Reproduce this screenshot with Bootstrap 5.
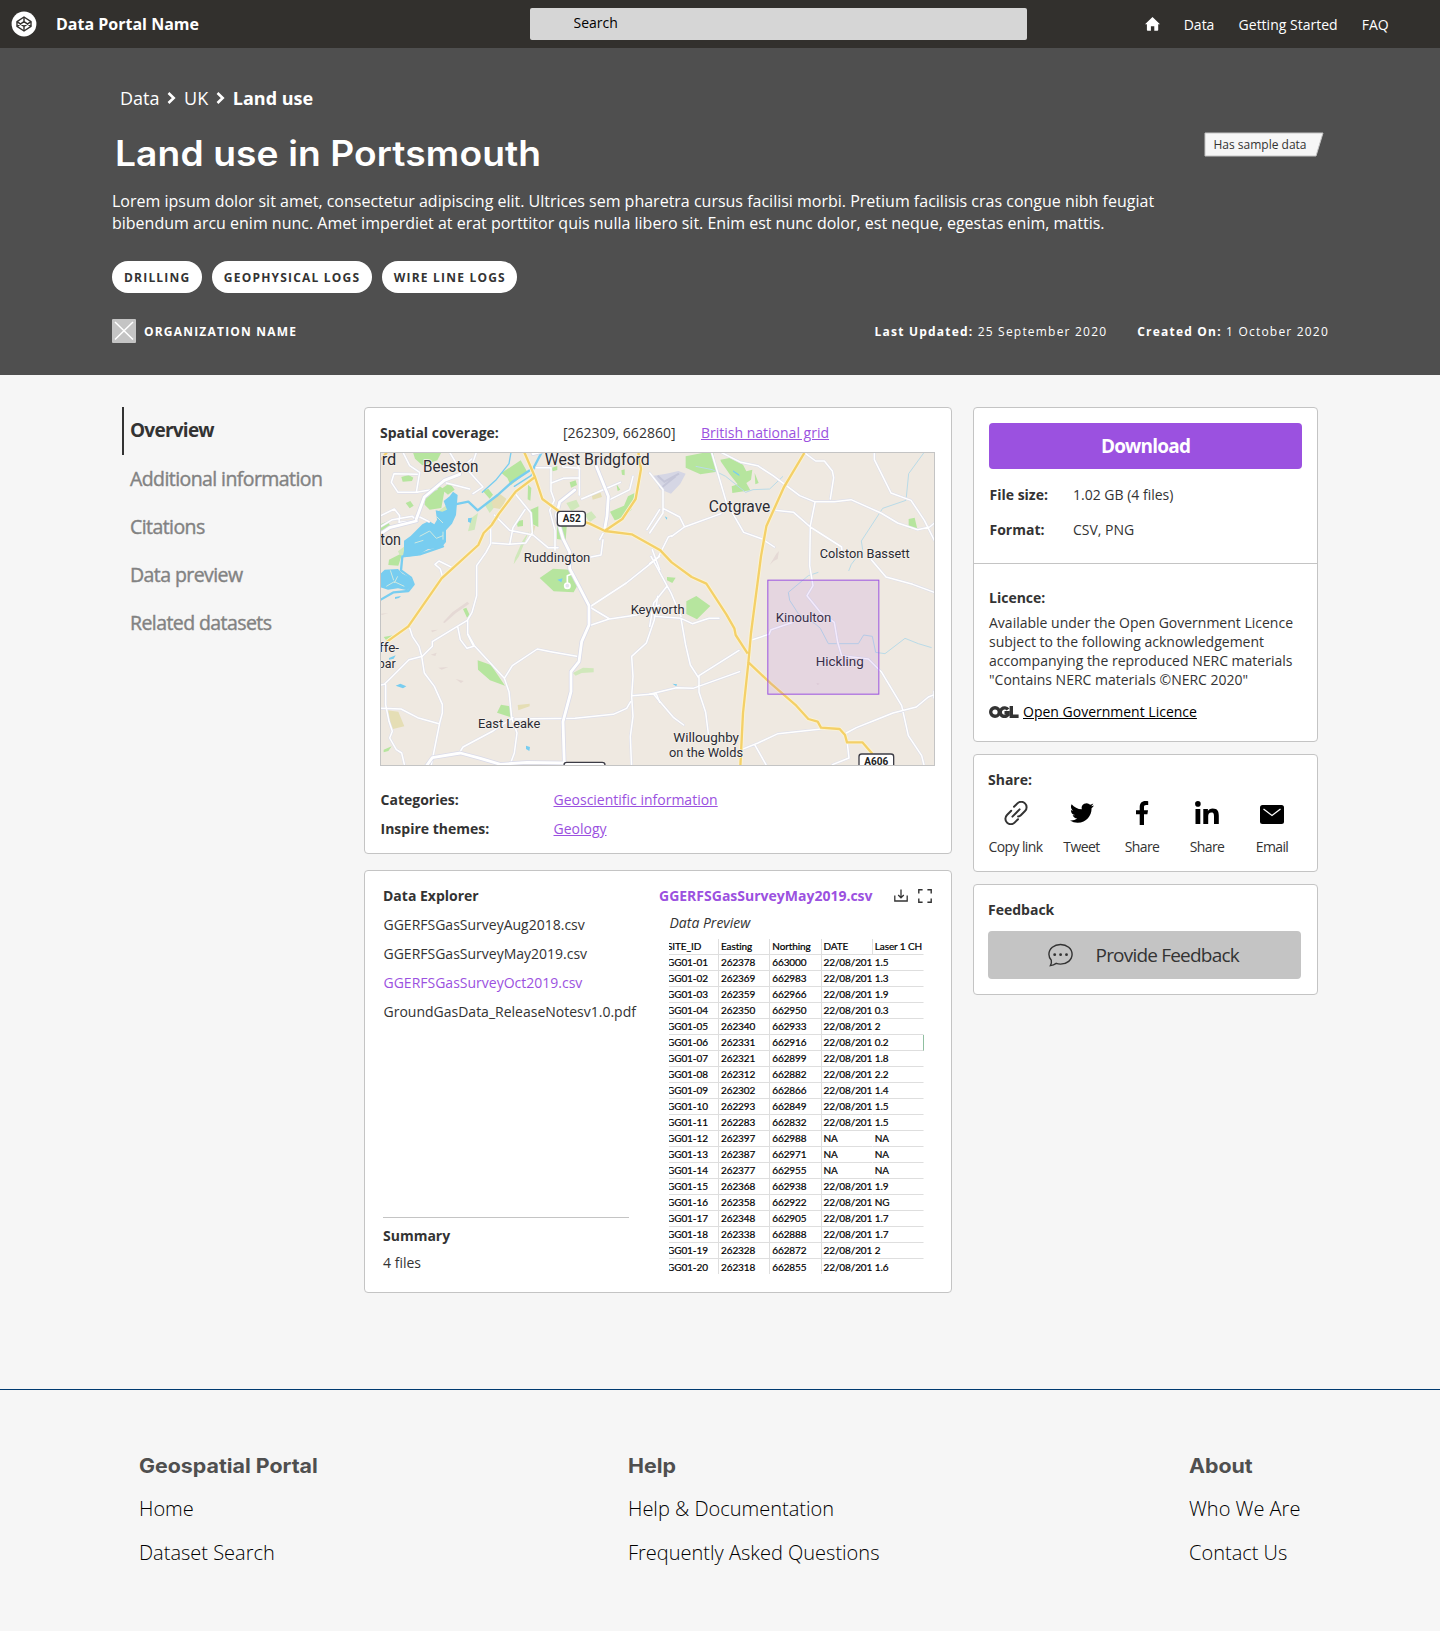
<!DOCTYPE html>
<html lang="en">
<head>
<meta charset="utf-8">
<meta name="viewport" content="width=device-width, initial-scale=1">
<title>Land use in Portsmouth</title>
<link rel="stylesheet" href="https://cdn.jsdelivr.net/npm/bootstrap@5.3.0/dist/css/bootstrap.min.css">
<style>
body{font-family:"Open Sans",sans-serif;font-size:14px;color:#333;background:#f6f6f6}
a{color:#9b51e0}
.fw-bold{font-weight:700!important}
.topbar{height:48px;background:#32302d;padding:0;flex-wrap:nowrap}
.brand-name{font-size:16px;line-height:24px;margin-left:19px}
.topbar .search-box{width:497px;height:32px;background:#d6d6d6;border:0;border-radius:2px;padding:0 0 3px 44px;font-size:14px;color:#000;box-shadow:none}
.search-box::placeholder{color:#000;opacity:1}
.brand-side{width:529.5px;padding-left:11px}
.nav-side{padding-left:118px;gap:24.2px}
.nav-side .nav-link{color:#fff;padding:0;line-height:20px;margin-top:2px}
.hero{background:#4f4f4f;height:327px;padding:38px 112px 0;color:#fff}
.crumbs{font-size:18px;line-height:24px;padding-left:8px;gap:7.8px;margin:0}
.crumbs a{color:#fff;text-decoration:none}
.page-title{font-family:Inter,sans-serif;font-weight:600;font-size:35px;letter-spacing:.1px;line-height:45px;margin:20.5px 0 0 2.5px;transform:scaleX(1.062);transform-origin:left}
.intro{font-size:16px;line-height:22px;margin:14.5px 0 26.500px}
.pill{background:#fff;color:#333;height:32.500px;border-radius:17px;padding:0 11.500px 0 12px;font-size:12px;font-weight:700;letter-spacing:1.2px;line-height:33px}
.meta-line{font-size:12px;letter-spacing:1.2px;line-height:25px;margin-top:26px}
.page-body{padding:32px 122px 0;height:1014px;width:1440px}
.side-nav{width:242px}
.side-nav .nav-link{height:48px;line-height:47px;padding:0 0 0 6px;border-left:2px solid transparent;font-size:19.500px;letter-spacing:-.58px;color:#828282;-webkit-text-stroke:.4px #828282}
.side-nav .nav-link.active{border-color:#333;color:#333;font-weight:700;font-size:19px;letter-spacing:-.75px;-webkit-text-stroke:0}
.panel{background:#fff;border:1px solid #c4c4c4;border-radius:4px}
.main-col{width:588px;gap:16px}
.right-col{width:345px;margin-left:21px;gap:12px}
.coverage-panel{height:447px;padding:16px 15px 0}
.map-view{width:555px;height:314px;border:1px solid #c4c4c4;display:block}
.meta-row{line-height:29px;padding-left:.5px}
.meta-row .lbl{width:173px;font-weight:700}
.explorer-panel{height:423px;padding:10px 17px 15px 18px}
.file-col{width:276px;line-height:29px}
.file-list a{color:#333;text-decoration:none;display:block;padding-left:.5px}
.file-list a.current{color:#9b51e0}
.file-rule{width:246px;border-top:1px solid #c4c4c4;line-height:27px;padding-top:4px;margin-bottom:1px}
.preview-table{width:255px;table-layout:fixed;font-family:Lato,sans-serif;font-size:10px;letter-spacing:-.1px;line-height:15px;color:#000;-webkit-text-stroke:.2px #000;border-collapse:separate;border-spacing:0;margin:3px 0 0 10px}
.preview-table th,.preview-table td{padding:0 0 0 2px;height:16px;border-bottom:1px solid #dedede;border-right:1px solid #dedede;font-weight:400;white-space:nowrap;overflow:hidden}
.preview-table td:nth-child(4){border-right-color:transparent}
.preview-table tr>:first-child{padding:0;text-indent:-2px;width:50px}
.preview-table tr>:last-child{border-right-color:transparent}
.preview-table td.picked{border-right-color:#8fbfa0!important}
.preview-table tr:last-child td{border-bottom:0;height:15px;line-height:14px}
.info-panel{height:335px}
.btn-get{background:#9b51e0;border:0;border-radius:4px;color:#fff;height:46px;font-weight:700;font-size:19px;letter-spacing:-.8px;width:313px;padding:0;line-height:44px}
.share-panel{height:118px;padding:21px 14px 0}
.share-item{color:#333;text-decoration:none;letter-spacing:-.6px;line-height:20px;text-align:center;white-space:nowrap}
.share-item svg{display:block;margin:0 auto 12px}
.feedback-panel{height:111px;padding:15px 14px 0}
.btn-feedback{width:313px;height:48px;border-radius:4px;border:0;background:#c4c4c4;color:#333;font-size:19px;letter-spacing:-.8px;line-height:46px;padding:0 0 0 60px;text-align:left;display:flex;align-items:center;margin-top:11px}
.site-footer{border-top:1px solid #003a70;height:242px;padding:61px 0 0 139px}
.site-footer h2{font-family:Inter,sans-serif;font-weight:700;font-size:20px;line-height:30px;color:#4f4f4f;margin:0 0 6px;transform:scaleX(1.068);transform-origin:left}
.site-footer a{display:block;color:#000;text-decoration:none;font-size:20px;font-weight:300;line-height:44px}
</style>
<script src="https://cdn.jsdelivr.net/npm/bootstrap@5.3.0/dist/js/bootstrap.bundle.min.js"></script>
</head>
<body>
<nav class="navbar topbar justify-content-start">
  <div class="brand-side d-flex align-items-center text-white">
    <svg width="26" height="26" viewBox="0 0 26 26"><circle cx="13" cy="13" r="12.4" fill="#fff"/><g fill="none" stroke="#32302d" stroke-width="1.4" stroke-linejoin="round"><path d="M13 6l7 4.600v4.800L13 20l-7-4.600v-4.800z"/><path d="M6 10.600l7 4.800 7-4.800M6 15.400l7-4.800 7 4.800M13 6v4.600M13 15.400V20"/></g></svg>
    <span class="brand-name fw-bold">Data Portal Name</span>
  </div>
  <input class="form-control search-box" type="text" placeholder="Search">
  <div class="nav-side d-flex align-items-center">
    <a href="#" class="d-flex"><svg width="15" height="14" viewBox="0 0 15 14"><path fill="#fff" d="M7.500 0L15 7.200h-1.800V13c0 .5-.3.8-.8.8H9.300V9.300H5.900v4.500H2.700c-.5 0-.8-.3-.8-.8V7.200H0z"/></svg></a>
    <a class="nav-link" href="#">Data</a>
    <a class="nav-link" href="#">Getting Started</a>
    <a class="nav-link" href="#">FAQ</a>
  </div>
</nav>

<header class="hero">
  <div class="crumbs d-flex align-items-center">
    <a href="#">Data</a>
    <svg width="9" height="12" viewBox="0 0 9 12"><path d="M1.500 1L6.700 6l-5.200 5" fill="none" stroke="#fff" stroke-width="2.600"/></svg>
    <a href="#">UK</a>
    <svg width="9" height="12" viewBox="0 0 9 12"><path d="M1.500 1L6.700 6l-5.200 5" fill="none" stroke="#fff" stroke-width="2.600"/></svg>
    <a href="#" class="fw-bold">Land use</a>
  </div>
  <div class="d-flex justify-content-between">
    <h1 class="page-title">Land use in Portsmouth</h1>
    <svg width="120" height="25" viewBox="0 0 120 25" class="me-1" style="margin-top:22px"><path d="M1 1h118l-7 23H1z" fill="#f6f6f6" stroke="#c4c4c4" stroke-linejoin="round"/><text x="9.500" y="17" font-size="12" fill="#333">Has sample data</text></svg>
  </div>
  <p class="intro">Lorem ipsum dolor sit amet, consectetur adipiscing elit. Ultrices sem pharetra cursus facilisi morbi. Pretium facilisis cras congue nibh feugiat<br>bibendum arcu enim nunc. Amet imperdiet at erat porttitor quis nulla libero sit. Enim est nunc dolor, est neque, egestas enim, mattis.</p>
  <div class="d-flex" style="gap:10px">
    <span class="pill">DRILLING</span><span class="pill">GEOPHYSICAL LOGS</span><span class="pill">WIRE LINE LOGS</span>
  </div>
  <div class="meta-line d-flex">
    <svg width="24" height="24" viewBox="0 0 24 24" class="me-2"><rect width="24" height="24" rx="1" fill="#c4c4c4"/><path d="M3 3l18 17.500M21 3L3 20.500" stroke="#fff" stroke-width="1.500"/></svg>
    <span class="fw-bold">ORGANIZATION NAME</span>
    <span class="ms-auto"><b>Last Updated:</b> 25 September 2020</span>
    <span style="margin-left:30px;margin-right:-1px"><b>Created On:</b> 1 October 2020</span>
  </div>
</header>

<div class="page-body d-flex align-items-start">
  <nav class="nav flex-column side-nav">
    <a class="nav-link active" href="#">Overview</a>
    <a class="nav-link" href="#">Additional information</a>
    <a class="nav-link" href="#">Citations</a>
    <a class="nav-link" href="#">Data preview</a>
    <a class="nav-link" href="#">Related datasets</a>
  </nav>

  <main class="main-col d-flex flex-column">
    <section class="panel coverage-panel">
      <div class="d-flex" style="line-height:18px;margin-bottom:10px">
        <b style="width:183px">Spatial coverage:</b><span style="width:138px">[262309, 662860]</span><a href="#">British national grid</a>
      </div>
      <svg class="map-view" viewBox="34 40 1659 936" preserveAspectRatio="none" font-family="Roboto,sans-serif">
        <rect x="30" y="36" width="1670" height="944" fill="#efe9e1"/>
        <!-- parks and woods -->
        <g fill="#b6e59e">
          <path d="M130 38h85l-12 24-45 15-22-20zM95 112l22-6 14 8-4 10-28 2zM165 180l45-40 15 10-10 55-35 5-15-15zM215 148l25-18 15 20-20 15zM108 190l14-6 10 14-12 8zM30 255l24-10 8 14-30 16zM58 360l40-20-12 38-30-2zM395 100l58-38 20 35-50 40-10-22zM340 155l16-8 14 18-10 12zM475 135l10 10-3 38-8-4zM440 245l20-4v18l-16 2zM482 210l24-10v62l-20-10zM562 255l30-5-4 52-26-4zM545 85l18-6v12l-14 4zM600 128l18-6 4 14-18 8zM740 132l12 18-8 4zM755 92l10-3v18l-8-2zM795 160l-20 10-12 28-42 18 14 26 28-8 22-24z"/>
          <path d="M510 415l40-28 50 3 22 50-10 18-60-3zM280 508l10-4 10 22-8 8zM324 662l40 14 42 62-45-16-36-32zM394 795l32 6-2 32-42-14zM42 592l28-5-18 18zM42 930l24-10-10 14-14 4z"/>
          <path d="M948 50l70-14 12-2 12 62-50 8-44-20zM1052 60l28-5 40 20 10 20 18-5-4 30-14 10 12 22-54 8-2-20 18-6-24-30-26-38zM1155 100l12 30-10 4zM1617 238l18-4 8 34-26-2zM892 412l26 2-10 16-16-8zM950 485l30-16 42 30-40 40-32-16z"/>
        </g>
        <g fill="#d0e8bb">
          <path d="M85 335l40-30 20 20-30 25-25-4zM205 215l35-25 5 35-15 10zM305 235l20-15-10 50-20 5zM345 195l30-20 5 20-20 25zM610 700l30-16 32 2v12l-36 2-18 8zM590 190l30-10 10 20-25 15zM645 225l20-10 15 18-20 15zM458 305l20-30-30 75-16 24 4-20z"/>
        </g>
        <g fill="#e5deb5">
          <path d="M365 180l25-18 20 15-15 32-25-5zM665 160l26-6 6 18-28 8zM52 812l34 4 18 44-34 8-12-24zM444 796l36-4v8l-34 12zM485 255l12 5-6 22-8-4z"/>
        </g>
        <g fill="#e5d9d5"><path d="M220 548l28-30 45-32 6 6-40 28-34 30zM185 572l20-2-18 8zM206 684l30-2-20 8zM258 718l24 6-8 6zM183 645l18-6-4 10zM34 522l22-2-20 6zM1200 376l20-34 8-8-4 24-12 6zM1340 730l10 2-6 4z"/></g>
        <path d="M852 108l38-6 36-8 22 8-16 30-28 30-34-14z" fill="#d5d6e4"/>
        <path d="M864 108l20 18 44-24M878 142l40-32" stroke="#c5c6d8" stroke-width="6" fill="none"/>
        <!-- river and lakes -->
        <g fill="#78cdf0">
          <path d="M250 156l14 10-5 60-12 26-18 20 0 35-15 18-40 4-30 18-45 6 4-20 0-30 20-14 35-35 20-10 16 10 8-14-4-28 20 4 14-6-10-26 18-14zM30 405l15-15 40-2 14 14 20 10 14 20-20 20-28-6-30 4-25-8zM295 236l12-2-4 16-8-4zM78 738l14-6 18 8-10 6zM563 420l16-4-4 12zM469 918l12 4-2 12-10-6zM885 230l8 4-2 6zM908 732l14 2-2 6zM58 655l20-8-6 10-14 3zM76 472l18-3-6 6-12 3zM1090 92l18 12 2 6-20-14z"/>
        </g>
        <g fill="none" stroke="#78cdf0" stroke-linecap="round" stroke-linejoin="round">
          <path stroke-width="7" d="M516 38L492 84l-66 44-42 38-60 46-28-26-40 8M220 320l-70 24-52 6-4 42 30 22 8 20-16 20-44 4-46 26"/>
          <path stroke-width="4" d="M424 38l-6 34-40 50-40 36M494 84l-10 24-50 32"/>
        </g>
        <path d="M62 392l10 30M50 440l24-14 30 14M84 410l-10 20M150 290l30-16 20 22 20-8M135 310l26-8M200 230l20 20M220 300v-24" stroke="#cfe9e0" stroke-width="3" fill="none"/>
        <g fill="none" stroke="#b9dbe8" stroke-width="3">
          <path d="M1662 40l-45 62-8 80-70 24-64 98 4 26-34 44-8 20M1346 398l-30 10-60 50 4 24 26 40 50 30 16 14 24 46h90l16-26 26 4 10 48 28 4 60-46 40 16 40 12M1240 110l-40 38-50 2-22 8-60-48-40-20-50-10"/>
        </g>
        <!-- minor roads: casing then surface -->
        <defs><g id="lanes">
          <path d="M120 565l8 25 20 30 8 30 8 50 30 40 24 54v26l-8 30-26 130M158 650l-40 10-60 60-14 14-12 2M48 735v60l10 50 10 30-8 20 20 35 16 10 8 34M34 806l60 2 50 26 64 18M158 650l30-30v-14l75-46 30-18 14-24 14-50v-90l28-40 14-26v-60M264 560l8 40 20 26 20-6-18-36v-42M294 582l20 36 90 98 14 40 8 78 16 46-8 60-14 38M404 716l24-38 75-50 40 8 78 14M436 838l180-2 115-12 40-18 12-20M184 958l-10 20M270 938l10-16 90-48 60-40"/>
          <path d="M220 416l-8-28-16-14 12-10 40 20M368 310l50 4 50-4 20-30-4-60-46-56M374 226l46 46 70 14 45 38h30M420 314l10-50 36-54M100 38l20 40 30 20-10 60 60-10M145 158h-60l-20-30 8-26 70 2M34 260l34-20 60-10 15 14M34 228l40-20 16 20-2 20 50-4M150 232l28 14M320 38l-20 60 40 44-30 20M240 38l30 50 36-30M230 130l70 18M500 84h44v70l10 28-14 30 16 60v60M545 130l36-14 48-2M560 38l20 44 50 4M629 86v80M600 38l30 50M636 178l70-30 46-20M690 300l14-26M700 300l-6 46-30 6M870 350L770 430l-110 72M660 502l60 36 80-12 70-30M658 558l60-20M864 470l-10 70-24 70-44 40 4 60-4 60 4 60-8 60 6 150M786 768l74-6 10 26M832 270l38-60M848 330l22 60M720 180l60-30 10-40"/>
          <path d="M840 100l40 50v70l-40 60M880 206l50 26 14 28M906 290l38-28 110-40M840 372l26-20 30-60 10-4M1026 38l44 150 52 90 56 20 36 24M1054 38l60 30 50 10 46 30 80 60 44 18h60l50-6 90 40 50 30 60 20 36-8 60-50M1308 42l30 22h26l24 30 4 20-10 64M1514 38v22l30 60 20 40 60 22 40 60 30 60M1216 212l56 6 50 44 94 60 2 24M1336 188l-14 70-2 120 10 60-18 30 40 50 42 30 10 60 12 40 80 10 40 40 60 100 20 90 40 60 10 40M1148 600l50-16 6-14 66-22M1505 360l44 52 80 22 70 26M1108 632l-120 76v50l20 60 10 80M840 764l80-20 50 2 140-50M852 764l60 70 30 22M856 530l78 6 14 80 14 60 26 40M934 536l34 16 50-16h30M844 350l60 110 30 70M892 440l-40 50-12 70M1115 930l50-20 60-28 130-14M1155 915l34 60M1430 880l30-16 50-20 60-24 70-18 36-30 20-8M1430 885l8 70-50 20M1693 755v20"/>
        </g>
        <path id="main-roads" d="M168 982l20-28 84-14 60 16 60 18 80-6 112 2M584 976l-4-130 24-90v-60l24-30 8-60 22-50v-58l-34-66-24-45v-50l-20-40-20-70 10-40 45-36M680 80l36 90-4 60-8 44M140 244l-80 20-30 20M140 238l24-66 60-50 46-18M490 42l80-20"/></defs>
        <g fill="none" stroke-linejoin="round" stroke-linecap="round">
          <use href="#lanes" stroke="#dfe0eb" stroke-width="8"/>
          <use href="#lanes" stroke="#fff" stroke-width="4.500"/>
          <use href="#main-roads" stroke="#d9dae8" stroke-width="13"/>
          <use href="#main-roads" stroke="#fff" stroke-width="8.500"/>
          <circle cx="593" cy="438" r="8" fill="#e5e5ee" stroke="#fff" stroke-width="5"/><path d="M593 428v-20l14-6" stroke="#fff" stroke-width="5"/>
        </g>
        <g fill="none" stroke-linejoin="round">
          <path stroke="#fbf3d5" stroke-width="12" d="M464 38l32 74 22 66 62 46 80 28 46 22 80 10 86 48 34 36 60 44 44 20 60 92 24 42 4 20 36 56M496 112l-58 44-50 66-22 34-24 24-16 36-110 100-100 144-64 46M806 38l8 50-16 90-40 60-50 34M1304 40l-62 104-52 116-16 90-30 230-8 90-16 150-8 160M1134 666l70 66 76 66 36 40 28 8 10 18 56 4 16 18 6 22h46l30 34"/>
          <path stroke="#f4d068" stroke-width="7" d="M464 38l32 74 22 66 62 46 80 28 46 22 80 10 86 48 34 36 60 44 44 20 60 92 24 42 4 20 36 56M496 112l-58 44-50 66-22 34-24 24-16 36-110 100-100 144-64 46M806 38l8 50-16 90-40 60-50 34M1304 40l-62 104-52 116-16 90-30 230-8 90-16 150-8 160M1134 666l70 66 76 66 36 40 28 8 10 18 56 4 16 18 6 22h46l30 34M34 60l24-30"/>
        </g>
        <!-- road shields -->
        <g fill="#fff" stroke="#3c3c46" stroke-width="4"><rect x="563" y="215" width="84" height="44" rx="9"/><rect x="583" y="968" width="123" height="40" rx="8"/><rect x="1468" y="943" width="104" height="50" rx="8"/></g>
        <g font-weight="700" fill="#222" font-size="31"><text x="579" y="247" textLength="54" lengthAdjust="spacingAndGlyphs">A52</text><text x="1484" y="975" textLength="72" lengthAdjust="spacingAndGlyphs">A606</text></g>
        <!-- place names -->
        <g fill="#2b2b33" stroke="#f5f1ec" stroke-width="5" paint-order="stroke" stroke-linejoin="round" font-size="47">
          <text x="36" y="77" textLength="44" lengthAdjust="spacingAndGlyphs">rd</text>
          <text x="160" y="97" textLength="166" lengthAdjust="spacingAndGlyphs">Beeston</text>
          <text x="525" y="76" textLength="315" lengthAdjust="spacingAndGlyphs">West Bridgford</text>
          <text x="32" y="315" textLength="62" lengthAdjust="spacingAndGlyphs">ton</text>
          <text x="1017" y="217" textLength="185" lengthAdjust="spacingAndGlyphs">Cotgrave</text>
          <g font-size="40">
            <text x="462" y="366" textLength="200" lengthAdjust="spacingAndGlyphs">Ruddington</text>
            <text x="783" y="522" textLength="162" lengthAdjust="spacingAndGlyphs">Keyworth</text>
            <text x="1350" y="356" textLength="270" lengthAdjust="spacingAndGlyphs">Colston Bassett</text>
            <text x="325" y="865" textLength="187" lengthAdjust="spacingAndGlyphs">East Leake</text>
            <text x="911" y="907" textLength="197" lengthAdjust="spacingAndGlyphs">Willoughby</text>
            <text x="898" y="952" textLength="222" lengthAdjust="spacingAndGlyphs">on the Wolds</text>
            <text x="28" y="638" textLength="60" lengthAdjust="spacingAndGlyphs">ffe-</text>
            <text x="24" y="684" textLength="54" lengthAdjust="spacingAndGlyphs">bar</text>
            <text x="1218" y="546" textLength="167" lengthAdjust="spacingAndGlyphs">Kinoulton</text>
            <text x="1338" y="680" textLength="144" lengthAdjust="spacingAndGlyphs">Hickling</text>
          </g>
        </g>
        <rect x="1194.500" y="421.500" width="333" height="342" fill="#9b51e0" fill-opacity=".12" stroke="#9b51e0" stroke-width="3"/>
      </svg>
      <div class="meta-row d-flex" style="margin-top:19px"><span class="lbl">Categories:</span><a href="#">Geoscientific information</a></div>
      <div class="meta-row d-flex"><span class="lbl">Inspire themes:</span><a href="#">Geology</a></div>
    </section>

    <section class="panel explorer-panel d-flex">
      <div class="file-col d-flex flex-column">
        <b>Data Explorer</b>
        <div class="file-list">
          <a href="#">GGERFSGasSurveyAug2018.csv</a>
          <a href="#">GGERFSGasSurveyMay2019.csv</a>
          <a href="#" class="current">GGERFSGasSurveyOct2019.csv</a>
          <a href="#">GroundGasData_ReleaseNotesv1.0.pdf</a>
        </div>
        <div class="file-rule mt-auto"><div class="fw-bold">Summary</div><div>4 files</div></div>
      </div>
      <div class="flex-grow-1">
        <div class="d-flex align-items-center" style="line-height:29px">
          <a href="#" class="fw-bold text-decoration-none">GGERFSGasSurveyMay2019.csv</a>
          <svg width="14" height="14" viewBox="0 0 14 14" style="margin-left:21px" fill="none" stroke="#333" stroke-width="1.300"><path d="M.8 6.500v5.500h12.400V6.500M7 .5v8M4.200 6L7 8.800 9.800 6"/></svg>
          <svg width="14" height="14" viewBox="0 0 14 14" style="margin-left:10px" fill="none" stroke="#333" stroke-width="1.400"><path d="M.8 4.600V.8h3.800M9.400.8h3.800v3.800M13.200 9.400v3.800H9.400M4.600 13.200H.8V9.400"/></svg>
        </div>
        <div class="fst-italic" style="line-height:26px;padding-left:10.500px">Data Preview</div>
        <table class="preview-table">
          <thead><tr><th>SITE_ID</th><th>Easting</th><th>Northing</th><th>DATE</th><th>Laser 1 CH</th></tr></thead>
          <tbody>
          <tr><td>GG01-01</td><td>262378</td><td>663000</td><td>22/08/201</td><td>1.5</td></tr>
          <tr><td>GG01-02</td><td>262369</td><td>662983</td><td>22/08/201</td><td>1.3</td></tr>
          <tr><td>GG01-03</td><td>262359</td><td>662966</td><td>22/08/201</td><td>1.9</td></tr>
          <tr><td>GG01-04</td><td>262350</td><td>662950</td><td>22/08/201</td><td>0.3</td></tr>
          <tr><td>GG01-05</td><td>262340</td><td>662933</td><td>22/08/201</td><td>2</td></tr>
          <tr><td>GG01-06</td><td>262331</td><td>662916</td><td>22/08/201</td><td class="picked">0.2</td></tr>
          <tr><td>GG01-07</td><td>262321</td><td>662899</td><td>22/08/201</td><td>1.8</td></tr>
          <tr><td>GG01-08</td><td>262312</td><td>662882</td><td>22/08/201</td><td>2.2</td></tr>
          <tr><td>GG01-09</td><td>262302</td><td>662866</td><td>22/08/201</td><td>1.4</td></tr>
          <tr><td>GG01-10</td><td>262293</td><td>662849</td><td>22/08/201</td><td>1.5</td></tr>
          <tr><td>GG01-11</td><td>262283</td><td>662832</td><td>22/08/201</td><td>1.5</td></tr>
          <tr><td>GG01-12</td><td>262397</td><td>662988</td><td>NA</td><td>NA</td></tr>
          <tr><td>GG01-13</td><td>262387</td><td>662971</td><td>NA</td><td>NA</td></tr>
          <tr><td>GG01-14</td><td>262377</td><td>662955</td><td>NA</td><td>NA</td></tr>
          <tr><td>GG01-15</td><td>262368</td><td>662938</td><td>22/08/201</td><td>1.9</td></tr>
          <tr><td>GG01-16</td><td>262358</td><td>662922</td><td>22/08/201</td><td>NG</td></tr>
          <tr><td>GG01-17</td><td>262348</td><td>662905</td><td>22/08/201</td><td>1.7</td></tr>
          <tr><td>GG01-18</td><td>262338</td><td>662888</td><td>22/08/201</td><td>1.7</td></tr>
          <tr><td>GG01-19</td><td>262328</td><td>662872</td><td>22/08/201</td><td>2</td></tr>
          <tr><td>GG01-20</td><td>262318</td><td>662855</td><td>22/08/201</td><td>1.6</td></tr>
          </tbody>
        </table>
      </div>
    </section>
  </main>

  <aside class="right-col d-flex flex-column">
    <section class="panel info-panel">
      <div style="padding:15px 15px 0;height:155px">
        <button class="btn btn-get">Download</button>
        <div class="d-flex" style="line-height:35px;margin-top:8px;padding-left:.5px"><b style="width:83.500px">File size:</b><span>1.02 GB (4 files)</span></div>
        <div class="d-flex" style="line-height:35px;padding-left:.5px"><b style="width:83.500px">Format:</b><span>CSV, PNG</span></div>
      </div>
      <div class="border-top" style="--bs-border-color:#c4c4c4;padding:22px 15px 0;line-height:19px">
        <div class="fw-bold" style="line-height:24px;margin-bottom:3px">Licence:</div>
        <div>Available under the Open Government Licence<br>subject to the following acknowledgement<br>accompanying the reproduced NERC materials<br>"Contains NERC materials ©NERC 2020"</div>
        <div class="d-flex align-items-center" style="margin-top:13px">
          <svg width="30" height="12" viewBox="0 0 30 12" fill="none" stroke="#333" stroke-width="3.400"><circle cx="6" cy="6" r="4.300"/><path d="M19 3.600A4.300 4.300 0 1 0 18.800 9V6.800H15.500M22.300 0v10.200H29.600"/></svg>
          <a href="#" style="color:#000;margin-left:4px">Open Government Licence</a>
        </div>
      </div>
    </section>

    <section class="panel share-panel">
      <div class="fw-bold" style="line-height:18px;margin-top:-5px;margin-bottom:12px">Share:</div>
      <div class="d-flex">
        <a href="#" class="share-item" style="width:55px"><svg width="24" height="24" viewBox="0 0 24 24" fill="none" stroke="#333" stroke-width="2" stroke-linecap="round"><path d="M10 5.800l3.400-3.400a5.300 5.300 0 0 1 7.600 0a5.300 5.300 0 0 1 0 7.600l-4.200 4.200a5.300 5.300 0 0 1-2.700 1.400M14 18.200l-3.400 3.400a5.300 5.300 0 0 1-7.600 0a5.300 5.300 0 0 1 0-7.600l4.200-4.200M8.400 15.600l7.200-7.200"/></svg>Copy link</a>
        <a href="#" class="share-item" style="width:38px;margin-left:19.500px"><svg width="24" height="24" viewBox="0 0 24 24"><path d="M23.950 4.570a10 10 0 0 1-2.820.775 4.960 4.960 0 0 0 2.160-2.723c-.95.555-2.005.959-3.127 1.184a4.920 4.920 0 0 0-8.384 4.482C7.690 8.095 4.067 6.130 1.640 3.162a4.820 4.820 0 0 0-.666 2.475c0 1.710.87 3.213 2.188 4.096a4.900 4.900 0 0 1-2.228-.616v.06a4.920 4.920 0 0 0 3.946 4.827 5 5 0 0 1-2.212.085 4.940 4.940 0 0 0 4.604 3.417 9.870 9.870 0 0 1-6.102 2.105c-.39 0-.779-.023-1.170-.067a14 14 0 0 0 7.557 2.209c9.053 0 13.998-7.496 13.998-13.985 0-.21 0-.42-.015-.63a9.900 9.900 0 0 0 2.460-2.548z"/></svg>Tweet</a>
        <a href="#" class="share-item" style="width:36px;margin-left:23.500px"><svg width="24" height="24" viewBox="0 0 24 24"><path d="M9.700 24V13.200H6V9.300h3.700V6C9.700 2.200 11.900 0 15.300 0c1.400 0 2.400.1 2.900.2v3.700h-2c-1.700 0-2.200.9-2.200 2.200v3.200h4l-.6 3.900H14V24z"/></svg>Share</a>
        <a href="#" class="share-item" style="width:36px;margin-left:29px"><svg width="24" height="24" viewBox="0 0 24 24"><circle cx="2.900" cy="2.900" r="2.800"/><path d="M.5 8H5.300v15H.5zM8.300 8h4.600v2.100c.8-1.500 2.400-2.500 4.700-2.500 4.900 0 6.200 2.800 6.200 7.200V23H19v-7.500c0-1.800-.1-3.900-2.500-3.900s-3.300 1.500-3.300 3.700V23H8.300z"/></svg>Share</a>
        <a href="#" class="share-item" style="width:34px;margin-left:30px"><svg width="24" height="24" viewBox="0 0 24 24"><rect y="4" width="24" height="19" rx="2.500"/><path d="M3.500 8l8.500 6.500L20.500 8" fill="none" stroke="#fff" stroke-width="1.300"/></svg>Email</a>
      </div>
    </section>

    <section class="panel feedback-panel">
      <div class="fw-bold" style="line-height:20px">Feedback</div>
      <button class="btn btn-feedback"><svg width="25" height="24" viewBox="0 0 25 24" style="margin-right:22.500px" fill="none" stroke="#333" stroke-width="1.400"><path d="M3.300 17.200C1.700 15.500.9 13.500.9 11.300.9 5.600 6.100 1.500 12.500 1.500s11.600 4.100 11.600 9.800-5.200 9.800-11.600 9.800c-1.500 0-3-.2-4.300-.7-1.600 1.200-3.500 2-5.800 2.200C3.300 20.800 3.700 19 3.300 17.200z"/><g fill="#333" stroke="none"><circle cx="6.700" cy="11.700" r="1.400"/><circle cx="12.600" cy="11.700" r="1.400"/><circle cx="18.500" cy="11.700" r="1.400"/></g></svg>Provide Feedback</button>
    </section>
  </aside>
</div>

<footer class="site-footer d-flex">
  <div style="width:489px"><h2>Geospatial Portal</h2><a href="#">Home</a><a href="#">Dataset Search</a></div>
  <div style="width:561px"><h2>Help</h2><a href="#">Help &amp; Documentation</a><a href="#">Frequently Asked Questions</a></div>
  <div><h2>About</h2><a href="#">Who We Are</a><a href="#">Contact Us</a></div>
</footer>
</body>
</html>
